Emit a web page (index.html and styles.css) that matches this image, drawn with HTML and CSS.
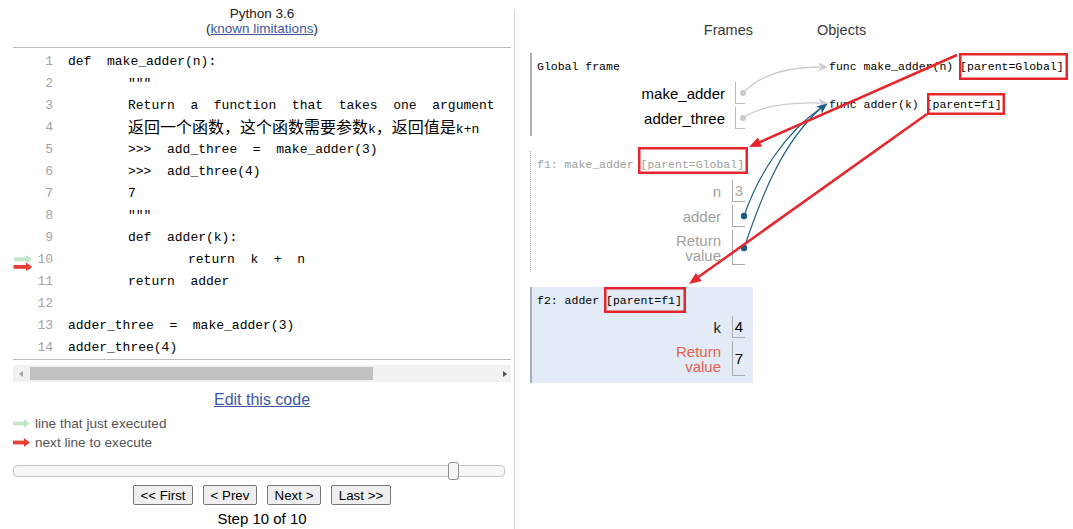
FILE: index.html
```html
<!DOCTYPE html>
<html>
<head>
<meta charset="utf-8">
<title>Python Tutor</title>
<link rel="stylesheet" href="styles.css">
</head>
<body>
<div class="page">
  <div class="left">
    <div class="title">
      <div>Python 3.6</div>
      <div>(<a class="lnk" href="#">known limitations</a>)</div>
    </div>
    <div class="code">
      <div class="ln"><span class="gut"></span><span class="num">1</span><span class="src">def  make_adder(n):</span></div>
      <div class="ln"><span class="gut"></span><span class="num">2</span><span class="src"><span class="in1"></span>"""</span></div>
      <div class="ln"><span class="gut"></span><span class="num">3</span><span class="src"><span class="in1"></span>Return  a  function  that  takes  one  argument</span></div>
      <div class="ln"><span class="gut"></span><span class="num">4</span><span class="src"><span class="in1"></span><span class="cjk">返回一个函数，这个函数需要参数</span>k<span class="cjk">，返回值是</span>k+n</span></div>
      <div class="ln"><span class="gut"></span><span class="num">5</span><span class="src"><span class="in1"></span>&gt;&gt;&gt;  add_three  =  make_adder(3)</span></div>
      <div class="ln"><span class="gut"></span><span class="num">6</span><span class="src"><span class="in1"></span>&gt;&gt;&gt;  add_three(4)</span></div>
      <div class="ln"><span class="gut"></span><span class="num">7</span><span class="src"><span class="in1"></span>7</span></div>
      <div class="ln"><span class="gut"></span><span class="num">8</span><span class="src"><span class="in1"></span>"""</span></div>
      <div class="ln"><span class="gut"></span><span class="num">9</span><span class="src"><span class="in1"></span>def  adder(k):</span></div>
      <div class="ln"><span class="gut"><svg width="20" height="22" viewBox="0 0 20 22"><rect x="1" y="8.3" width="13" height="4" fill="#c6e4c7"/><polygon points="13,6 19,10.3 13,14.6" fill="#c6e4c7"/><rect x="0.5" y="16" width="13" height="3.8" fill="#e93f34"/><polygon points="13,13.6 19.5,17.9 13,22" fill="#e93f34"/></svg></span><span class="num">10</span><span class="src"><span class="in2"></span>return  k  +  n</span></div>
      <div class="ln"><span class="gut"></span><span class="num">11</span><span class="src"><span class="in1"></span>return  adder</span></div>
      <div class="ln"><span class="gut"></span><span class="num">12</span><span class="src"> </span></div>
      <div class="ln"><span class="gut"></span><span class="num">13</span><span class="src">adder_three  =  make_adder(3)</span></div>
      <div class="ln"><span class="gut"></span><span class="num">14</span><span class="src">adder_three(4)</span></div>
    </div>
    <div class="hscroll"><span class="sa-l"></span><span class="thumb"></span><span class="sa-r"></span></div>
    <div class="edit"><a href="#">Edit this code</a></div>
    <div class="legend">
      <div class="leg"><svg class="legarrow" width="17" height="9" viewBox="0 0 17 9"><rect x="0" y="2.6" width="12" height="3.8" fill="#c6e4c7"/><polygon points="11,0 17,4.5 11,9" fill="#c6e4c7"/></svg>line that just executed</div>
      <div class="leg"><svg class="legarrow" width="17" height="9" viewBox="0 0 17 9"><rect x="0" y="2.6" width="12" height="3.8" fill="#e93f34"/><polygon points="11,0 17,4.5 11,9" fill="#e93f34"/></svg>next line to execute</div>
    </div>
    <div class="slider"><span class="handle" style="left:434px"></span></div>
    <div class="btns">
      <button class="btn wide">&lt;&lt; First</button>
      <button class="btn">&lt; Prev</button>
      <button class="btn">Next &gt;</button>
      <button class="btn wide">Last &gt;&gt;</button>
    </div>
    <div class="step">Step 10 of 10</div>
  </div>

  <div class="right">
    <div class="hdr"><span class="h-frames">Frames</span><span class="h-objects">Objects</span></div>
    <div class="viz">
      <div class="frames">
        <div class="frame global">
          <div class="fhead">Global frame</div>
          <div class="var"><span class="vname">make_adder</span><span class="vval"></span></div>
          <div class="var"><span class="vname">adder_three</span><span class="vval"></span></div>
        </div>
        <div class="frame f1">
          <div class="fhead">f1: make_adder [parent=Global]</div>
          <div class="var"><span class="vname">n</span><span class="vval">3</span></div>
          <div class="var"><span class="vname">adder</span><span class="vval"></span></div>
          <div class="var ret"><span class="vname">Return<br>value</span><span class="vval"></span></div>
        </div>
        <div class="frame f2">
          <div class="fhead">f2: adder [parent=f1]</div>
          <div class="var"><span class="vname">k</span><span class="vval">4</span></div>
          <div class="var ret"><span class="vname">Return<br>value</span><span class="vval">7</span></div>
        </div>
      </div>
      <div class="objects">
        <div class="obj o1">func make_adder(n) [parent=Global]</div>
        <div class="obj o2">func adder(k) [parent=f1]</div>
      </div>
    </div>
  </div>
</div>

<svg class="overlay" width="1073" height="529" viewBox="0 0 1073 529">
  <path d="M743,93 C762,73 790,67 820,67" fill="none" stroke="#cccccc" stroke-width="1.3"/>
  <path d="M0,0 L-10,-4.5 L-7,0 L-10,4.5 Z" fill="#cccccc" transform="translate(828,67)"/>
  <path d="M743,118 C760,106 785,102 820,103" fill="none" stroke="#cccccc" stroke-width="1.3"/>
  <path d="M0,0 L-10,-4.5 L-7,0 L-10,4.5 Z" fill="#cccccc" transform="translate(828,103)"/>
  <circle cx="743" cy="93" r="3" fill="#cccccc"/>
  <circle cx="743" cy="118" r="3" fill="#cccccc"/>
  <path d="M744,216 C758,175 785,133 821,108" fill="none" stroke="#1a5b85" stroke-width="1.2"/>
  <path d="M744,248 C762,195 782,143 821,108" fill="none" stroke="#1a5b85" stroke-width="1.2"/>
  <path d="M0,0 L-11,-4.5 L-8,0 L-11,4.5 Z" fill="#1a5b85" transform="translate(827.5,103.5) rotate(-38)"/>
  <circle cx="744" cy="216" r="3.2" fill="#1a5b85"/>
  <circle cx="744" cy="248" r="3.2" fill="#1a5b85"/>
  <g fill="none" stroke="#e5262c" stroke-width="2.5">
    <rect x="960.25" y="54.25" width="106.5" height="24.5"/>
    <rect x="928.25" y="94.25" width="75.5" height="19.5"/>
    <rect x="639.25" y="148.25" width="107.5" height="24.5"/>
    <rect x="605.25" y="288.25" width="79.5" height="23.5"/>
    <line x1="957" y1="55" x2="758" y2="143"/>
    <line x1="927" y1="114" x2="697" y2="278"/>
  </g>
  <path d="M0,0 L-12,-5 L-12,5 Z" fill="#e5262c" transform="translate(749,147) rotate(155.9)"/>
  <path d="M0,0 L-12,-5 L-12,5 Z" fill="#e5262c" transform="translate(689,284) rotate(144.5)"/>
</svg>
</body>
</html>
```

FILE: styles.css
```css
html, body {
  margin: 0;
  padding: 0;
}

body {
  width: 1073px;
  height: 529px;
  overflow: hidden;
  position: relative;
  background: #ffffff;
  font-family: "Liberation Sans", Arial, sans-serif;
  color: #000;
}

.page {
  display: flex;
  align-items: flex-start;
}

/* ---------- left column ---------- */
.left {
  margin-left: 13px;
  width: 498px;
  display: flex;
  flex-direction: column;
}

.title {
  padding-top: 6px;
  text-align: center;
  font-size: 13.5px;
  line-height: 15px;
  color: #222;
}

.lnk {
  color: #3d58a2;
  text-decoration: underline;
}

.code {
  margin-top: 11px;
  border-top: 1px solid #bcbcbc;
  border-bottom: 1px solid #bcbcbc;
  padding-top: 3px;
  font-family: "Liberation Mono", "Noto Sans CJK SC", monospace;
  font-size: 13px;
}

.ln {
  display: flex;
  height: 22px;
  line-height: 22px;
  align-items: center;
}

.gut {
  width: 20px;
  height: 22px;
  flex: none;
  display: flex;
}

.num {
  width: 20px;
  flex: none;
  text-align: right;
  color: #a4a4a4;
}

.src {
  margin-left: 15px;
  white-space: pre;
  color: #000;
}

.in1 {
  display: inline-block;
  width: 60px;
}

.in2 {
  display: inline-block;
  width: 120px;
}

.cjk {
  font-family: "Noto Sans CJK SC", sans-serif;
  font-size: 16px;
  line-height: 22px;
}

.hscroll {
  margin-top: 5px;
  height: 17px;
  background: #f1f1f1;
  display: flex;
  align-items: center;
}

.sa-l {
  margin-left: 6px;
  width: 0;
  height: 0;
  border-top: 3.5px solid transparent;
  border-bottom: 3.5px solid transparent;
  border-right: 4px solid #a3a3a3;
}

.thumb {
  margin-left: 7px;
  width: 343px;
  height: 13px;
  background: #c1c1c1;
}

.sa-r {
  margin-left: auto;
  margin-right: 4px;
  width: 0;
  height: 0;
  border-top: 3.5px solid transparent;
  border-bottom: 3.5px solid transparent;
  border-left: 4px solid #505050;
}

.edit {
  margin-top: 9px;
  text-align: center;
  font-size: 16px;
  line-height: 18px;
}

.edit a {
  color: #3d58a2;
  text-decoration: underline;
}

.legend {
  margin-top: 5px;
  font-size: 13.6px;
  line-height: 19px;
  color: #555;
}

.leg {
  display: flex;
  align-items: center;
}

.legarrow {
  margin-right: 5px;
  flex: none;
}

.slider {
  margin-top: 13px;
  width: 492px;
  height: 12px;
  box-sizing: border-box;
  border: 1px solid #c5c5c5;
  border-radius: 4px;
  background: #f6f6f6;
  position: relative;
}

.handle {
  position: absolute;
  top: -4px;
  width: 11px;
  height: 18px;
  box-sizing: border-box;
  border: 1px solid #8f8f8f;
  border-radius: 3px;
  background: #f6f6f6;
}

.btns {
  margin-top: 8px;
  display: flex;
  justify-content: center;
  gap: 10px;
}

.btn {
  width: 54px;
  height: 20px;
  padding: 0;
  font-family: "Liberation Sans", Arial, sans-serif;
  font-size: 13.3px;
  color: #000;
  background: #efefef;
  border: 1px solid #767676;
  border-radius: 2px;
}

.btn.wide {
  width: 60px;
}

.step {
  margin-top: 5px;
  text-align: center;
  font-size: 15px;
  line-height: 18px;
}

/* ---------- right column ---------- */
.right {
  margin-left: 3px;
  margin-top: 10px;
  height: 519px;
  flex: 1;
  border-left: 1px solid #d4d4d4;
  padding-left: 15px;
}

.hdr {
  margin-top: 11px;
  display: flex;
  font-size: 14.5px;
  line-height: 18px;
  color: #3a3a3a;
}

.h-frames {
  width: 223px;
  text-align: right;
}

.h-objects {
  margin-left: 64px;
}

.viz {
  margin-top: 14px;
  display: flex;
  align-items: flex-start;
}

.frames {
  width: 223px;
  flex: none;
}

.frame {
  box-sizing: border-box;
  width: 223px;
  padding: 0 8px 7px 5px;
  border-left: 2px solid #a7afb8;
}

.frame + .frame {
  margin-top: 15px;
}

.fhead {
  height: 27px;
  display: flex;
  align-items: center;
  margin-bottom: 2px;
  font-family: "Liberation Mono", monospace;
  font-size: 11.5px;
  white-space: pre;
  color: #000;
}

.var {
  display: flex;
  justify-content: flex-end;
  align-items: center;
  height: 22px;
}

.var + .var {
  margin-top: 3px;
}

.var.ret {
  height: 35px;
}

.vname {
  font-size: 15px;
  line-height: 15px;
  text-align: right;
  margin-right: 11px;
  color: #000;
}

.vval {
  box-sizing: border-box;
  width: 13px;
  height: 100%;
  border-left: 1px solid #aaaaaa;
  border-bottom: 1px solid #aaaaaa;
  display: flex;
  align-items: center;
  justify-content: center;
  font-size: 15px;
}

.global .vname {
  margin-right: 10px;
}

.global .vval {
  width: 10px;
  border-color: #b8b8b8;
}

.f1 {
  border-left: 1px dotted #a9a9a9;
  padding-left: 6px;
}

.f1 .fhead,
.f1 .vname {
  color: #a0a0a0;
}

.f1 .vval {
  color: #b0a890;
}

.f2 {
  background: #e2ebf6;
}

.f2 .vname {
  color: #222;
}

.f2 .ret .vname {
  color: #e8604f;
}

.objects {
  margin-left: 76px;
  flex: none;
}

.obj {
  font-family: "Liberation Mono", monospace;
  font-size: 11.5px;
  white-space: pre;
  display: flex;
  align-items: center;
  color: #000;
}

.o1 {
  height: 27px;
}

.o2 {
  margin-top: 14px;
  height: 20px;
}

/* ---------- arrows overlay ---------- */
.overlay {
  position: absolute;
  left: 0;
  top: 0;
  pointer-events: none;
}
```
